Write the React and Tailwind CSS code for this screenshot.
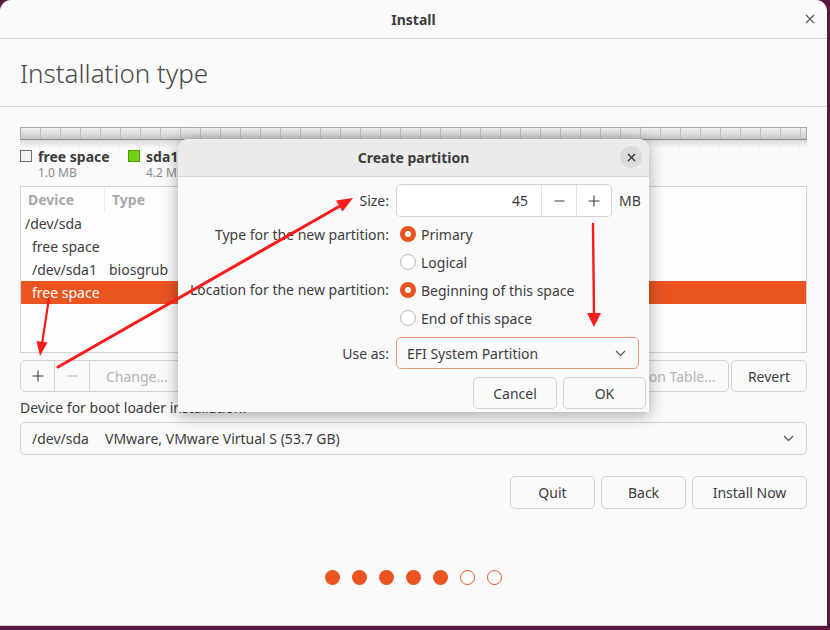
import React from "react";

function Chevron() {
  return (
    <svg width="11" height="7" viewBox="0 0 11 7">
      <path d="M1 1l4.5 4.5L10 1" fill="none" stroke="#505050" strokeWidth="1.1" />
    </svg>
  );
}

function Plus({ color = "#3d3d3d" }) {
  return (
    <svg width="12" height="12" viewBox="0 0 12 12">
      <path d="M6 0.5v11M0.5 6h11" stroke={color} strokeWidth="1.1" />
    </svg>
  );
}

function Minus({ color = "#3d3d3d" }) {
  return (
    <svg width="11" height="12" viewBox="0 0 11 12">
      <path d="M0.5 6h10" stroke={color} strokeWidth="1.1" />
    </svg>
  );
}

function Radio({ checked, label }) {
  return (
    <div className="h-[28px] flex items-center gap-[5px]">
      {checked ? (
        <div className="w-[16px] h-[16px] rounded-full bg-[#e95420] flex items-center justify-center">
          <div className="w-[6px] h-[6px] rounded-full bg-white" />
        </div>
      ) : (
        <div className="w-[16px] h-[16px] rounded-full bg-white border border-[#b9b9b9]" />
      )}
      <span>{label}</span>
    </div>
  );
}

const segments = Array.from({ length: 40 });

export default function App() {
  return (
    <div className="relative w-[830px] h-[630px] overflow-hidden bg-[#5a1841] font-['Noto_Sans','DejaVu_Sans',sans-serif] text-[14px] text-[#3d3d3d]">
      {/* main window */}
      <div className="w-[827px] h-[626px] bg-[#fafafa] rounded-t-[11px] border-b border-[#cfcfcf] flex flex-col">
        <div className="h-[39px] shrink-0 border-b border-[#d8d8d8] relative flex items-center justify-center">
          <span className="font-bold text-[14px]">Install</span>
          <svg width="10" height="10" viewBox="0 0 10 10" className="absolute right-[12px] top-[14px]">
            <path d="M1 1l8 8M9 1l-8 8" stroke="#5a5a5a" strokeWidth="1.2" />
          </svg>
        </div>
        <div className="h-[68px] shrink-0 border-b border-[#d8d8d8] flex items-center px-5">
          <h1 className="text-[26px] font-light text-[#4a4a4a] leading-none">Installation type</h1>
        </div>

        <div className="px-5 flex flex-col">
          {/* partition bar */}
          <div className="mt-[20px] h-[13px] flex border border-[#a8a8a8] border-b-[#8c8c8c] bg-linear-to-b from-[#efefef] via-[#dedede] to-[#c6c6c6] overflow-hidden">
            {segments.map((_, i) => (
              <div key={i} className="w-[20px] shrink-0 border-r border-[#bdbdbd] last:border-r-0" />
            ))}
          </div>
          <div className="h-[8px] flex overflow-hidden bg-linear-to-b from-[#dadada] to-[#fafafa]">
            {segments.map((_, i) => (
              <div key={i} className="w-[20px] shrink-0 border-r border-[#e6e6e6] last:border-r-0" />
            ))}
          </div>

          {/* legend */}
          <div className="flex">
            <div className="w-[108px] flex gap-[6px]">
              <div className="mt-[2px] w-[12px] h-[12px] border border-[#6e6e6e] bg-[#f2f2f2]" />
              <div className="flex flex-col">
                <span className="font-bold leading-[17px]">free space</span>
                <span className="text-[12px] leading-[15px] text-[#8a8a8a]">1.0 MB</span>
              </div>
            </div>
            <div className="flex gap-[6px]">
              <div className="mt-[2px] w-[12px] h-[12px] border border-[#4e9a06] bg-[#73d216]" />
              <div className="flex flex-col">
                <span className="font-bold leading-[17px]">sda1</span>
                <span className="text-[12px] leading-[15px] text-[#8a8a8a]">4.2 MB</span>
              </div>
            </div>
          </div>

          {/* tree view */}
          <div className="mt-[6px] h-[167px] border border-[#d2d2d2] bg-[#fdfdfd] flex flex-col">
            <div className="h-[25px] flex items-center font-bold text-[#a9a9a9]">
              <div className="w-[84px] h-full flex items-center pl-[7px] border-r border-[#ececec]">Device</div>
              <div className="pl-[7px]">Type</div>
            </div>
            <div className="h-[23px] flex items-center pl-[4px]">/dev/sda</div>
            <div className="h-[23px] flex items-center pl-[11px]">free space</div>
            <div className="h-[23px] flex items-center pl-[11px]">
              <span className="w-[77px]">/dev/sda1</span>
              <span>biosgrub</span>
            </div>
            <div className="h-[23px] flex items-center pl-[11px] bg-[#e95420] text-white">free space</div>
          </div>

          {/* partition buttons */}
          <div className="mt-[7px] h-[32px] flex">
            <div className="flex border border-[#d2d2d2] rounded-[5px] overflow-hidden">
              <div className="w-[34px] flex items-center justify-center border-r border-[#d2d2d2]">
                <Plus />
              </div>
              <div className="w-[35px] flex items-center justify-center border-r border-[#d2d2d2]">
                <Minus color="#b5b5b5" />
              </div>
              <div className="w-[95px] flex items-center pl-[16px] text-[#b5b5b5]">Change...</div>
            </div>
            <div className="flex-1" />
            <div className="w-[166px] flex items-center justify-center border border-[#d2d2d2] rounded-[5px] text-[#b5b5b5]">
              New Partition Table...
            </div>
            <div className="ml-[2px] w-[76px] flex items-center justify-center border border-[#d2d2d2] rounded-[5px]">
              Revert
            </div>
          </div>

          <div className="mt-[7px] leading-[18px]">Device for boot loader installation:</div>
          <div className="mt-[5px] h-[33px] border border-[#d2d2d2] rounded-[5px] flex items-center pl-[11px] pr-[12px]">
            <span className="w-[73px]">/dev/sda</span>
            <span className="flex-1">VMware, VMware Virtual S (53.7 GB)</span>
            <Chevron />
          </div>

          <div className="mt-[21px] h-[33px] flex justify-end gap-[6px]">
            <div className="w-[85px] flex items-center justify-center border border-[#d2d2d2] rounded-[5px]">Quit</div>
            <div className="w-[85px] flex items-center justify-center border border-[#d2d2d2] rounded-[5px]">Back</div>
            <div className="w-[115px] flex items-center justify-center border border-[#d2d2d2] rounded-[5px]">Install Now</div>
          </div>

          <div className="mt-[61px] flex justify-center gap-[12px]">
            {[0, 1, 2, 3, 4].map((i) => (
              <div key={i} className="w-[15px] h-[15px] rounded-full bg-[#e95420]" />
            ))}
            {[5, 6].map((i) => (
              <div key={i} className="w-[15px] h-[15px] rounded-full bg-white border-[1.5px] border-[#e95420]" />
            ))}
          </div>
        </div>
      </div>

      {/* Create partition dialog */}
      <div className="absolute left-[178px] top-[139px] w-[471px] h-[273px] bg-[#fafafa] rounded-t-[10px] shadow-[0_3px_16px_rgba(0,0,0,0.35)] flex flex-col">
        <div className="h-[38px] shrink-0 bg-[#ebebeb] rounded-t-[10px] border-b border-[#d6d6d6] relative flex items-center justify-center">
          <span className="font-bold">Create partition</span>
          <div className="absolute right-[7px] top-[7px] w-[22px] h-[22px] rounded-full bg-[#dadada] flex items-center justify-center">
            <svg width="9" height="9" viewBox="0 0 9 9">
              <path d="M1 1l7 7M8 1l-7 7" stroke="#333" strokeWidth="1.4" />
            </svg>
          </div>
        </div>

        <div className="flex flex-col pt-[7px]">
          <div className="flex items-center gap-[7px] h-[33px]">
            <div className="w-[211px] text-right">Size:</div>
            <div className="w-[216px] h-full flex border border-[#d2d2d2] rounded-[5px] bg-white overflow-hidden">
              <div className="flex-1 flex items-center justify-end pr-[13px]">45</div>
              <div className="w-[35px] flex items-center justify-center border-l border-[#e2e2e2]">
                <Minus />
              </div>
              <div className="w-[35px] flex items-center justify-center border-l border-[#e2e2e2]">
                <Plus />
              </div>
            </div>
            <div>MB</div>
          </div>

          <div className="mt-[3px] flex items-start gap-[7px]">
            <div className="w-[211px] h-[28px] flex items-center justify-end">Type for the new partition:</div>
            <div className="flex flex-col pl-[4px]">
              <Radio checked label="Primary" />
              <Radio label="Logical" />
            </div>
          </div>

          <div className="flex items-start gap-[7px]">
            <div className="w-[211px] h-[26px] flex items-center justify-end">Location for the new partition:</div>
            <div className="flex flex-col pl-[4px]">
              <Radio checked label="Beginning of this space" />
              <Radio label="End of this space" />
            </div>
          </div>

          <div className="mt-[5px] flex items-center gap-[7px] h-[32px]">
            <div className="w-[211px] text-right">Use as:</div>
            <div className="w-[243px] h-full flex items-center pl-[10px] pr-[12px] border-[1.5px] border-[#eb9a7c] rounded-[5px] bg-[#fafafa]">
              <span className="flex-1">EFI System Partition</span>
              <Chevron />
            </div>
          </div>

          <div className="mt-[8px] h-[32px] flex justify-end gap-[6px] pr-[3px]">
            <div className="w-[84px] flex items-center justify-center border border-[#d2d2d2] rounded-[5px]">Cancel</div>
            <div className="w-[83px] flex items-center justify-center border border-[#d2d2d2] rounded-[5px]">OK</div>
          </div>
        </div>
      </div>

      {/* annotation arrows */}
      <svg className="absolute left-0 top-0 pointer-events-none" width="830" height="630" viewBox="0 0 830 630">
        <g fill="#f81c1c" stroke="#f81c1c" strokeLinecap="round">
          <line x1="49" y1="298" x2="42" y2="344" strokeWidth="2.2" />
          <polygon points="40,356 47.5,342.5 36.5,341" stroke="none" />
          <line x1="58" y1="367" x2="340" y2="206" strokeWidth="3" />
          <polygon points="353,198 342.5,211.5 336,200.5" stroke="none" />
          <line x1="593" y1="224" x2="594" y2="315" strokeWidth="2.4" />
          <polygon points="594,327 587,313 601,313" stroke="none" />
        </g>
      </svg>
    </div>
  );
}
